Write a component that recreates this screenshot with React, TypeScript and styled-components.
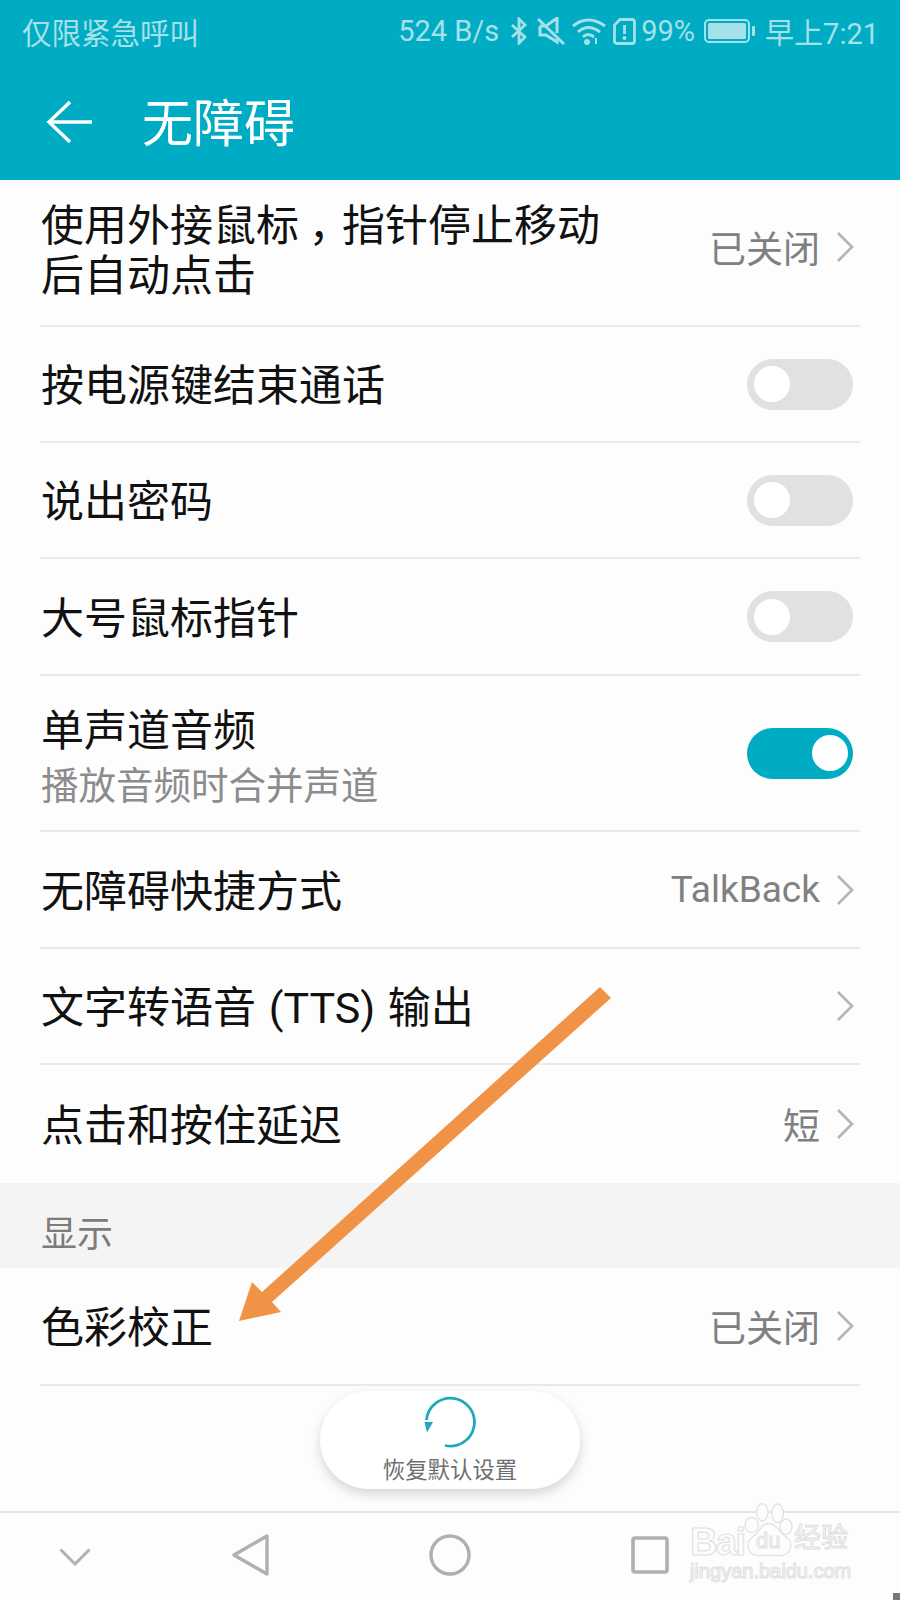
import React from "react"
import styled, { createGlobalStyle } from "styled-components"

const cjk = `"Noto Sans CJK SC", "Noto Sans", sans-serif`
const latin = `Roboto, "Noto Sans CJK SC", sans-serif`

const GlobalStyle = createGlobalStyle`
html, body {
    margin: 0;
    padding: 0;
    background: #fdfdfd;
}
`

const Screen = styled.div`
position: relative;
width: 900px;
height: 1600px;
overflow: hidden;
display: flex;
flex-direction: column;
background: #fdfdfd;
font-family: ${cjk};
`

const Header = styled.header`
height: 180px;
flex-shrink: 0;
background: #00acc4;
display: flex;
flex-direction: column;
`

const StatusBar = styled.div`
height: 62px;
padding: 0 21px 0 22px;
display: flex;
align-items: center;
justify-content: space-between;
color: #a6e0e8;
font-size: 29px;
`

const EmergencyText = styled.span`
font-size: 29.5px;
`

const StatusRight = styled.div`
display: flex;
align-items: center;
font-family: ${latin};
`

const StatusSlot = styled.span<{ $left: number }>`
display: flex;
align-items: center;
margin-left: ${(p) => p.$left}px;
`

const Toolbar = styled.div`
height: 116px;
display: flex;
align-items: center;
padding: 0 0 0 46px;
`

const BackButton = styled.span`
display: flex;
width: 96px;
margin-top: 4px;
`

const Title = styled.h1`
margin: 0;
color: #fff;
font-size: 51px;
font-weight: 400;
line-height: 1;
`

const List = styled.main`
flex: 1;
display: flex;
flex-direction: column;
`

const Row = styled.div<{ $height: number; $plain?: boolean; $lift?: number }>`
height: ${(p) => p.$height}px;
box-sizing: border-box;
margin: 0 40px 0 40px;
padding-left: 1px;
padding-bottom: ${(p) => p.$lift || 0}px;
display: flex;
align-items: center;
justify-content: space-between;
border-bottom: ${(p) => (p.$plain ? "none" : "2px solid #e9e9e9")};
`

const RowText = styled.div<{ $drop?: number }>`
display: flex;
flex-direction: column;
padding-top: ${(p) => p.$drop || 0}px;
`

const RowTitle = styled.div`
color: #111;
font-size: 43px;
line-height: 50px;
padding-top: 4px;
width: 570px;
font-family: ${latin};
word-spacing: 2px;
`

const CommaCell = styled.span`
padding: 0 0.28em 0 0.22em;
font-feature-settings: "halt";
`

const RowSub = styled.div`
margin-top: 1px;
color: #8c8c8c;
font-size: 37.5px;
line-height: 52px;
`

const RowValue = styled.div`
display: flex;
align-items: center;
gap: 16px;
margin-right: 6px;
color: #808080;
font-size: 37px;
font-family: ${latin};
`

const Track = styled.div<{ $on?: boolean }>`
width: 106px;
height: 51px;
margin-right: 7px;
border-radius: 26px;
background: ${(p) => (p.$on ? "#00acc4" : "#e1e1e1")};
display: flex;
align-items: center;
justify-content: ${(p) => (p.$on ? "flex-end" : "flex-start")};
padding: 0 ${(p) => (p.$on ? 5 : 7)}px;
box-sizing: border-box;
`

const Knob = styled.div`
width: 36px;
height: 36px;
border-radius: 50%;
background: #fff;
`

const SectionHeader = styled.div`
height: 85px;
box-sizing: border-box;
padding: 10px 41px 0;
background: #f4f4f4;
color: #7c7c7c;
font-size: 36px;
display: flex;
align-items: center;
`

const NavBar = styled.nav`
height: 89px;
flex-shrink: 0;
box-sizing: border-box;
border-top: 2px solid #e6e6e6;
background: #fdfdfd;
padding: 21px 0 0 0;
display: flex;
align-items: flex-start;
`

const NavSlot = styled.div<{ $left: number; $top?: number }>`
display: flex;
margin-left: ${(p) => p.$left}px;
margin-top: ${(p) => p.$top || 0}px;
`

const RestoreButton = styled.button`
position: absolute;
left: 320px;
top: 1391px;
width: 260px;
height: 98px;
padding: 5px 0 0;
border: none;
border-radius: 49px;
background: #fff;
box-shadow: 0 5px 12px rgba(0, 0, 0, 0.16);
display: flex;
flex-direction: column;
align-items: center;
`

const RestoreLabel = styled.span`
margin-top: 5px;
color: #6f6f6f;
font-size: 22.4px;
line-height: 30px;
font-family: ${cjk};
`

const ArrowLayer = styled.svg`
position: absolute;
left: 0;
top: 0;
pointer-events: none;
`

const Watermark = styled.div`
position: absolute;
left: 680px;
top: 1495px;
width: 220px;
height: 105px;
`

const PawMark = styled.svg`
position: absolute;
left: 0;
top: 0;
`

const OutlineText = styled.span<{ $x: number; $y: number; $size: number; $weight?: number }>`
position: absolute;
left: ${(p) => p.$x}px;
top: ${(p) => p.$y}px;
font-family: "Liberation Sans", sans-serif;
font-size: ${(p) => p.$size}px;
font-weight: ${(p) => p.$weight || 400};
line-height: 1;
white-space: nowrap;
color: #fdfdfd;
-webkit-text-stroke: 1.2px #e2e2e2;
`

const WatermarkBrand = styled(OutlineText)`
letter-spacing: -1.5px;
`

const WatermarkHan = styled(OutlineText)`
font-family: ${cjk};
-webkit-text-stroke: 1px #dedede;
`

const CornerMark = styled.div`
position: absolute;
right: 0;
bottom: 0;
width: 7px;
height: 7px;
background: #777;
`

const Chevron = () => (
    <svg width="18" height="32" viewBox="0 0 18 32" fill="none">
        <path d="M2 2 L16 16 L2 30" stroke="#b4b4b4" strokeWidth="2.6" />
    </svg>
)

const rows = [
    { h: 116, title: "按电源键结束通话" },
    { h: 116, title: "说出密码" },
    { h: 117, title: "大号鼠标指针" },
]

const iconColor = "#a6e0e8"

export default function App() {
    return (
        <Screen>
            <GlobalStyle />
            <Header>
                <StatusBar>
                    <EmergencyText>仅限紧急呼叫</EmergencyText>
                    <StatusRight>
                        <span>524 B/s</span>
                        <StatusSlot $left={12}>
                            <svg width="16" height="28" viewBox="0 0 16 28" fill="none" stroke={iconColor} strokeWidth="2.8">
                                <path d="M1 8 L14 20 L8 26 V2 L14 8 L1 20" />
                            </svg>
                        </StatusSlot>
                        <StatusSlot $left={10}>
                            <svg width="28" height="28" viewBox="0 0 28 28" fill="none" stroke={iconColor} strokeWidth="3">
                                <path d="M1 2 L27 27" />
                                <path d="M3 9 H9 L20 1 V16 M20 22 V25 L9 18 H3 V9" />
                            </svg>
                        </StatusSlot>
                        <StatusSlot $left={7}>
                            <svg width="34" height="28" viewBox="0 0 34 28" fill="none" stroke={iconColor} strokeWidth="3">
                                <path d="M1 9 Q16 -3 33 9" />
                                <path d="M6 15 Q16 6 28 15" />
                                <path d="M11 20 Q16 15 22 20" />
                                <circle cx="15" cy="25" r="3" fill={iconColor} stroke="none" />
                                <path d="M24 27 V21" strokeWidth="2" />
                            </svg>
                        </StatusSlot>
                        <StatusSlot $left={7}>
                            <svg width="23" height="27" viewBox="0 0 23 27" fill="none" stroke={iconColor} strokeWidth="2.8">
                                <path d="M7 1.5 H19 Q21.5 1.5 21.5 4 V23 Q21.5 25.5 19 25.5 H4 Q1.5 25.5 1.5 23 V7 Z" />
                                <path d="M11.5 7 V16" />
                                <circle cx="11.5" cy="20" r="2" fill={iconColor} stroke="none" />
                            </svg>
                        </StatusSlot>
                        <StatusSlot $left={5}>99%</StatusSlot>
                        <StatusSlot $left={9}>
                            <svg width="52" height="24" viewBox="0 0 52 24" fill="none">
                                <rect x="1" y="1" width="44" height="22" rx="4" stroke={iconColor} strokeWidth="2" />
                                <rect x="4" y="4" width="38" height="16" rx="1.5" fill={iconColor} />
                                <rect x="48" y="7" width="3" height="10" rx="1" fill={iconColor} />
                            </svg>
                        </StatusSlot>
                        <StatusSlot $left={9}>早上7:21</StatusSlot>
                    </StatusRight>
                </StatusBar>
                <Toolbar>
                    <BackButton>
                        <svg width="46" height="46" viewBox="0 0 46 46" fill="none" stroke="#fff" strokeWidth="3.4">
                            <path d="M24 3 L3 23 L24 43" />
                            <path d="M3 23 H46" />
                        </svg>
                    </BackButton>
                    <Title>无障碍</Title>
                </Toolbar>
            </Header>
            <List>
                <Row $height={147} $lift={12}>
                    <RowText $drop={4}>
                        <RowTitle>使用外接鼠标<CommaCell>，</CommaCell>指针停止移动后自动点击</RowTitle>
                    </RowText>
                    <RowValue>已关闭<Chevron /></RowValue>
                </Row>
                {rows.map((r) => (
                    <Row key={r.title} $height={r.h}>
                        <RowTitle>{r.title}</RowTitle>
                        <Track><Knob /></Track>
                    </Row>
                ))}
                <Row $height={156}>
                    <RowText $drop={5}>
                        <RowTitle>单声道音频</RowTitle>
                        <RowSub>播放音频时合并声道</RowSub>
                    </RowText>
                    <Track $on><Knob /></Track>
                </Row>
                <Row $height={117}>
                    <RowTitle>无障碍快捷方式</RowTitle>
                    <RowValue>TalkBack<Chevron /></RowValue>
                </Row>
                <Row $height={116}>
                    <RowTitle>文字转语音 (TTS) 输出</RowTitle>
                    <RowValue><Chevron /></RowValue>
                </Row>
                <Row $height={118} $plain>
                    <RowTitle>点击和按住延迟</RowTitle>
                    <RowValue>短<Chevron /></RowValue>
                </Row>
                <SectionHeader>显示</SectionHeader>
                <Row $height={118}>
                    <RowTitle>色彩校正</RowTitle>
                    <RowValue>已关闭<Chevron /></RowValue>
                </Row>
            </List>
            <NavBar>
                <NavSlot $left={59} $top={14}>
                    <svg width="32" height="18" viewBox="0 0 32 18" fill="none" stroke="#b0b0b0" strokeWidth="3">
                        <path d="M1.5 1.5 L16 16 L30.5 1.5" />
                    </svg>
                </NavSlot>
                <NavSlot $left={141}>
                    <svg width="37" height="42" viewBox="0 0 37 42" fill="none" stroke="#b0b0b0" strokeWidth="3.4" strokeLinejoin="round">
                        <path d="M35 2 V40 L2 21 Z" />
                    </svg>
                </NavSlot>
                <NavSlot $left={160}>
                    <svg width="42" height="42" viewBox="0 0 42 42" fill="none" stroke="#b0b0b0" strokeWidth="3.4">
                        <circle cx="21" cy="21" r="19" />
                    </svg>
                </NavSlot>
                <NavSlot $left={160} $top={2}>
                    <svg width="38" height="38" viewBox="0 0 38 38" fill="none" stroke="#b0b0b0" strokeWidth="3.6">
                        <rect x="2" y="2" width="34" height="34" rx="2" />
                    </svg>
                </NavSlot>
            </NavBar>
            <RestoreButton>
                <svg width="52" height="52" viewBox="0 0 52 52" fill="none">
                    <path d="M21 49.5 A 24 24 0 1 0 2.5 24" stroke="#1fa9bd" strokeWidth="2.8" />
                    <path d="M0.5 26 L9 26 L3 36.5 Z" fill="#1fa9bd" />
                </svg>
                <RestoreLabel>恢复默认设置</RestoreLabel>
            </RestoreButton>
            <ArrowLayer width="900" height="1600" viewBox="0 0 900 1600">
                <path d="M600 987 L611 998 L272 1302 L281 1312 L239 1321 L252 1282 L262 1292 Z" fill="#f09347" />
            </ArrowLayer>
            <Watermark>
                <PawMark width="220" height="105" viewBox="0 0 660 315" fill="#fdfdfd" stroke="#e2e2e2" strokeWidth="4">
                    <ellipse cx="247" cy="52" rx="17" ry="26" />
                    <ellipse cx="293" cy="55" rx="17" ry="28" />
                    <ellipse cx="215" cy="90" rx="20" ry="23" />
                    <ellipse cx="318" cy="95" rx="18" ry="23" />
                    <path d="M266 85 C290 85 296 112 318 126 C342 142 335 184 296 182 C280 181 254 181 238 182 C204 184 192 146 218 126 C240 110 244 85 266 85 Z" />
                </PawMark>
                <WatermarkBrand $x={10} $y={28} $size={38} $weight={700}>Bai</WatermarkBrand>
                <OutlineText $x={76} $y={35} $size={22}>du</OutlineText>
                <WatermarkHan $x={114} $y={27} $size={27}>经验</WatermarkHan>
                <OutlineText $x={10} $y={66} $size={20}>jingyan.baidu.com</OutlineText>
            </Watermark>
            <CornerMark />
        </Screen>
    )
}
